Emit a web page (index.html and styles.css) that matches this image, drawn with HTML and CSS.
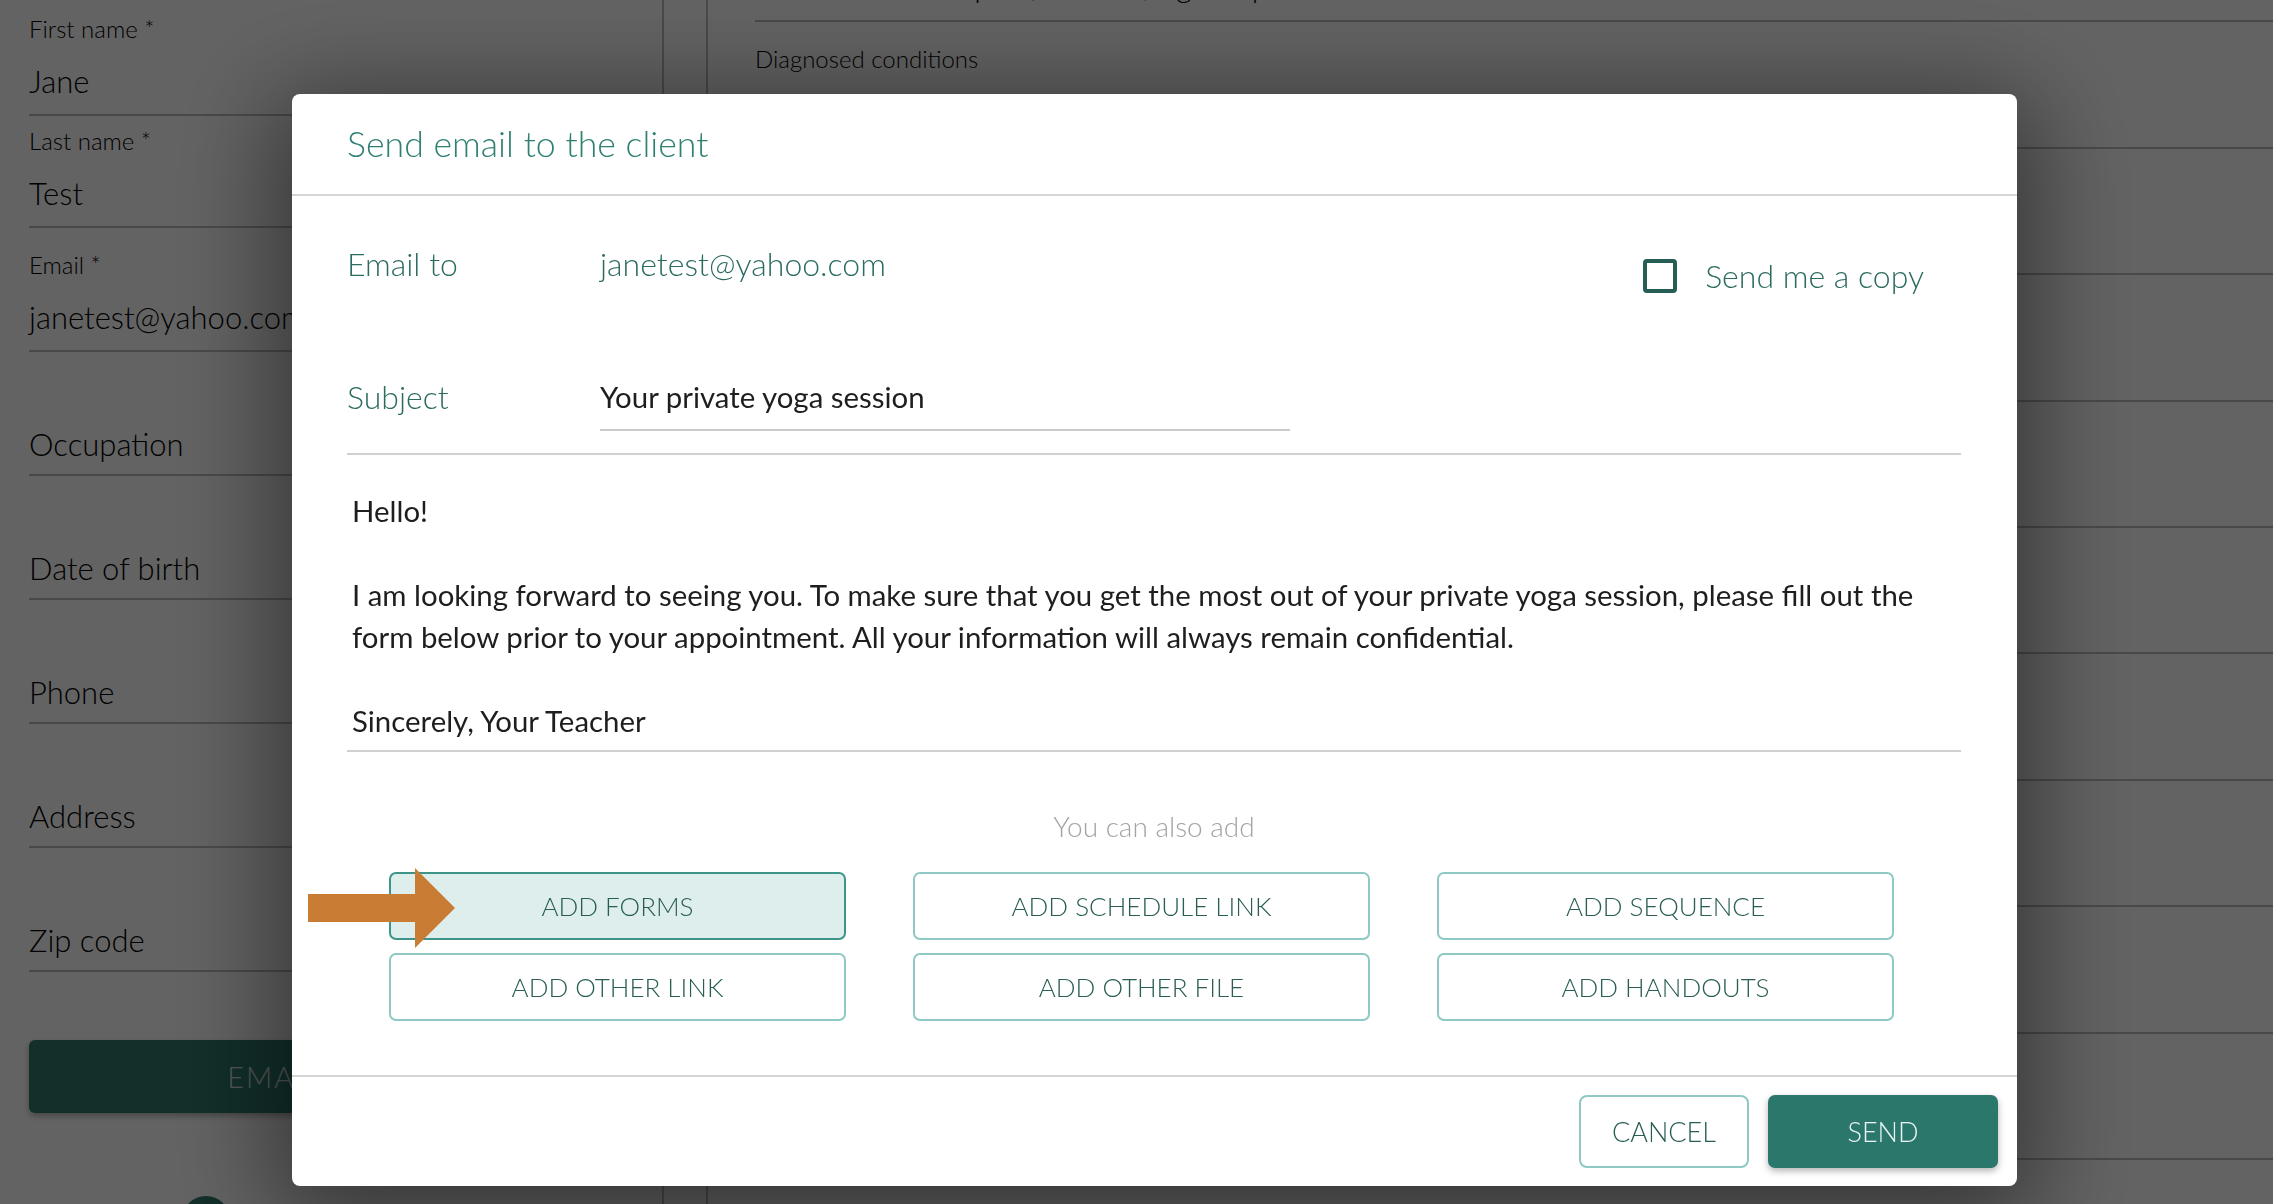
FILE: index.html
```html
<!DOCTYPE html>
<html lang="en">
<head>
    <meta charset="UTF-8">
    <meta name="viewport" content="width=device-width, initial-scale=1.0">
    <title>Client profile</title>
    <link rel="stylesheet" href="styles.css">
</head>
<body>
    <div class="page">
        <!-- left column: contact details -->
        <div class="profile">
            <div class="field">
                <div class="field-label">First name *</div>
                <div class="field-value">Jane</div>
            </div>
            <div class="field tight">
                <div class="field-label">Last name *</div>
                <div class="field-value">Test</div>
            </div>
            <div class="field">
                <div class="field-label">Email *</div>
                <div class="field-value">janetest@yahoo.com</div>
            </div>
            <div class="field empty"><div class="field-value">Occupation</div></div>
            <div class="field empty"><div class="field-value">Date of birth</div></div>
            <div class="field empty"><div class="field-value">Phone</div></div>
            <div class="field empty"><div class="field-value">Address</div></div>
            <div class="field empty"><div class="field-value">Zip code</div></div>
            <button class="email-btn">EMAIL CLIENT</button>
            <div class="fab"></div>
        </div>

        <!-- right column: health questions -->
        <div class="health">
            <div class="health-row first">
                <div class="health-label">Injuries and surgeries</div>
                <div class="health-value">Mild lower back pain, sciatica, tight hips</div>
            </div>
            <div class="health-row"><div class="health-label">Diagnosed conditions</div></div>
            <div class="health-row"></div>
            <div class="health-row"></div>
            <div class="health-row"></div>
            <div class="health-row"></div>
            <div class="health-row"></div>
            <div class="health-row"></div>
            <div class="health-row"></div>
            <div class="health-row"></div>
        </div>
    </div>

    <div class="backdrop">
        <div class="dialog">
            <div class="dialog-title">Send email to the client</div>

            <div class="dialog-content">
                <div class="row-to">
                    <div class="row-label">Email to</div>
                    <div class="to-address">janetest@yahoo.com</div>
                    <label class="copy"><span class="check"></span>Send me a copy</label>
                </div>

                <div class="row-subject">
                    <div class="row-label">Subject</div>
                    <div class="subject-input">Your private yoga session</div>
                </div>

                <div class="message">Hello!<br><br>I am looking forward to seeing you. To make sure that you get the most out of your private yoga session, please fill out the<br>form below prior to your appointment. All your information will always remain confidential.<br><br>Sincerely, Your Teacher</div>

                <div class="also">You can also add</div>

                <div class="add-grid">
                    <button class="add-btn active">ADD FORMS</button>
                    <button class="add-btn">ADD SCHEDULE LINK</button>
                    <button class="add-btn">ADD SEQUENCE</button>
                    <button class="add-btn">ADD OTHER LINK</button>
                    <button class="add-btn">ADD OTHER FILE</button>
                    <button class="add-btn">ADD HANDOUTS</button>
                </div>
            </div>

            <div class="dialog-actions">
                <button class="btn-cancel">CANCEL</button>
                <button class="btn-send">SEND</button>
            </div>

            <!-- callout arrow pointing at the forms button -->
            <svg class="pointer" width="147" height="80" viewBox="0 0 147 80">
                <polygon points="0,26 107,26 107,0 147,40 107,80 107,54 0,54" fill="#c97c33"/>
            </svg>
        </div>
    </div>
</body>
</html>
```

FILE: styles.css
```css
html, body {
    margin: 0;
    height: 100%;
    overflow: hidden;
    background: #fff;
    font-family: Lato, "Open Sans", sans-serif;
}

button {
    font-family: inherit;
    cursor: pointer;
}

/* ---------- page underneath ---------- */
.page {
    display: flex;
    height: 1204px;
    overflow: hidden;
}

.profile {
    width: 664px;
    box-sizing: border-box;
    padding: 0 24px 0 29px;
    border-right: 2px solid #bdbdbd;
    flex-shrink: 0;
}

.field {
    padding: 22px 0 13px;
    border-bottom: 2px solid #bdbdbd;
}
.field:first-child { padding-top: 14px; }
.field.tight { padding-top: 10px; }
.field.empty { padding: 72px 0 10px; }

.field-label {
    font-size: 24px;
    line-height: 30px;
    font-weight: 300;
    color: #000;
}
.field-value {
    margin-top: 17px;
    font-size: 31px;
    line-height: 40px;
    font-weight: 300;
    color: #000;
}
.field.empty .field-value { margin-top: 0; }

.email-btn {
    display: block;
    width: 100%;
    height: 73px;
    margin-top: 68px;
    border: none;
    border-radius: 6px;
    background: #2f7a6e;
    color: rgba(255,255,255,0.8);
    font-size: 29px;
    font-weight: 300;
    letter-spacing: 2px;
    box-shadow: 0 3px 6px rgba(0,0,0,0.3);
}

.fab {
    width: 48px;
    height: 48px;
    margin: 83px 0 0 153px;
    border-radius: 50%;
    background: #2f7a6e;
}

.health {
    flex: 1;
    margin-left: 42px;
    padding-left: 47px;
    border-left: 2px solid #bdbdbd;
}

.health-row {
    height: 124.4px;
    border-bottom: 2px solid #bdbdbd;
}
.health-row.first { margin-top: -104px; }

.health-label {
    padding-top: 22px;
    font-size: 24px;
    line-height: 30px;
    font-weight: 300;
    color: #000;
}
.health-value {
    margin-top: 17px;
    font-size: 31px;
    line-height: 40px;
    font-weight: 300;
    color: #000;
}

/* ---------- modal ---------- */
.backdrop {
    position: fixed;
    inset: 0;
    background: rgba(0,0,0,0.61);
    padding: 94px 0 0 292px;
}

.dialog {
    position: relative;
    width: 1725px;
    height: 1092px;
    display: flex;
    flex-direction: column;
    background: #fff;
    border-radius: 8px;
    box-shadow: 0 20px 100px 20px rgba(0,0,0,0.45);
}

.dialog-title {
    height: 100px;
    line-height: 100px;
    padding-left: 55px;
    border-bottom: 2px solid #d5d5d5;
    font-size: 35.7px;
    font-weight: 300;
    color: #2f8073;
}

.dialog-content {
    flex: 1;
    padding: 0 56px 0 55px;
}

.row-to {
    display: flex;
    align-items: flex-start;
    margin-top: 48px;
    line-height: 40px;
}

.row-label {
    width: 253px;
    flex-shrink: 0;
    font-size: 32px;
    line-height: 40px;
    font-weight: 300;
    color: #2b6b60;
}

.to-address {
    font-size: 32px;
    font-weight: 300;
    color: #2b6b60;
}

.copy {
    display: flex;
    align-items: center;
    gap: 28px;
    margin: 12px 37px 0 auto;
    font-size: 32px;
    font-weight: 300;
    color: #2b6b60;
}

.check {
    width: 34px;
    height: 34px;
    box-sizing: border-box;
    border: 4px solid #265e55;
    border-radius: 4px;
}

.row-subject {
    display: flex;
    align-items: flex-start;
    margin-top: 80.5px;
    padding-bottom: 22px;
    border-bottom: 2px solid #d0d0d0;
}

.subject-input {
    width: 690px;
    padding-bottom: 12.5px;
    border-bottom: 2px solid #cacaca;
    font-size: 29.4px;
    line-height: 40px;
    color: #1e1e1e;
}

.message {
    padding: 35px 5px 8px;
    border-bottom: 2px solid #d0d0d0;
    font-size: 29.4px;
    line-height: 42px;
    color: #1e1e1e;
    white-space: nowrap;
}

.also {
    margin-top: 58.7px;
    text-align: center;
    font-size: 28px;
    line-height: 30px;
    font-weight: 300;
    color: #a3a3a3;
}

.add-grid {
    display: grid;
    grid-template-columns: repeat(3, 457px);
    column-gap: 67px;
    row-gap: 13px;
    margin-top: 31.3px;
    padding-left: 42px;
}

.add-btn {
    height: 68px;
    border: 2px solid #8fc9c3;
    border-radius: 7px;
    background: #fff;
    font-size: 26px;
    font-weight: 300;
    color: #2a5e55;
}
.add-btn.active {
    background: #deeeed;
    border-color: #3d958a;
}

.dialog-actions {
    display: flex;
    justify-content: flex-end;
    gap: 19px;
    padding: 18px 19px;
    border-top: 2px solid #d5d5d5;
}

.btn-cancel {
    width: 170px;
    height: 73px;
    border: 2px solid #8fc9c3;
    border-radius: 8px;
    background: #fff;
    font-size: 27px;
    font-weight: 300;
    color: #2a5e55;
}

.btn-send {
    width: 230px;
    height: 73px;
    border: none;
    border-radius: 7px;
    background: #2c776b;
    font-size: 27px;
    font-weight: 300;
    color: #e8f4f2;
    box-shadow: 0 3px 7px rgba(0,0,0,0.3);
}

.pointer {
    position: absolute;
    left: 16px;
    top: 774px;
}
```
